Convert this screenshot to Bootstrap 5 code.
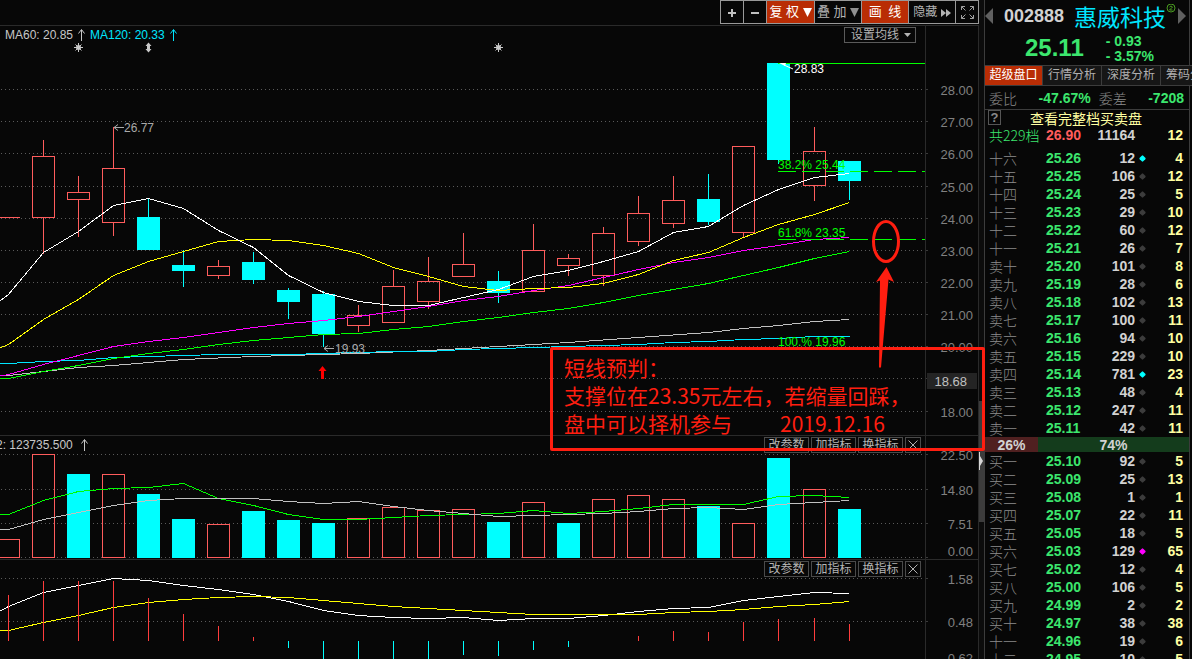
<!DOCTYPE html>
<html lang="zh-CN">
<head>
<meta charset="utf-8">
<meta name="viewport" content="width=device-width, initial-scale=1">
<title>惠威科技 002888</title>
<link rel="stylesheet" href="https://cdn.jsdelivr.net/npm/bootstrap@5.3.0/dist/css/bootstrap.min.css">
<style>
:root{--ink:#070707;--edge:#2a2a2a;--grey:#8c8c8c;--pale:#c8c8c8;--up:#ff5c5c;--down:#00ffff;--gain:#3ce66e;--hot:#b92d05;--note:#ff1e10;--cream:#ffffa0}
body{background:var(--ink);color:var(--pale);font:12px/16px "Liberation Sans","Noto Sans CJK SC",sans-serif;height:100vh;overflow:hidden}
button,select{font:inherit;color:inherit;background:none;border:0;padding:0;border-radius:0}
.toolbar{height:25px}
.tool{height:24px;border:1px solid #999;border-left-width:0;font-size:13px;line-height:20px;color:#b4b4b4;white-space:nowrap}
.tool:first-child{border-left-width:1px}
.tool.on{background:var(--hot);color:#fff}
.tool.tight{font-size:12px}
.w-s{width:24px}.w-m{width:47px}.w-l{width:48px}.w-f{width:23px}
.pane{border-top:1px solid var(--edge);border-right:1px solid var(--edge)}
.pane svg.plot{display:block;width:100%;height:auto}
.pane-tools{top:1px;right:57px;gap:2px}
.pane-tools button,.avg{border:1px solid #4a4a4a;height:16px;line-height:14px;color:#b4b4b4}
.pane-tools button{width:45px}
.pane-tools .shut{width:16px}
.avg{top:1px;right:62px;width:72px;border-color:#5a5a5a}
.avg select{appearance:none;width:70px;height:14px;padding-left:6px;line-height:14px;display:block}
.avg svg{right:4px;top:5px;pointer-events:none}
.strip{width:5px;background:#0c0c0c;padding-top:401px}
.thumb{height:121px;background:#3c3c3c;padding-top:50px}
.callout{top:347px;right:-1px;width:435px;height:104px;border:3px solid var(--note);border-radius:2px;padding:3px 11px;color:var(--note);font:21px/28px "Noto Sans CJK SC",sans-serif;z-index:3;pointer-events:none;white-space:nowrap}
.callout p{margin:0}
.callout .day{margin-left:48px}
.quote{width:208px;border-left:1px solid #3c3c3c;padding-right:2px}
.quote-in{border-right:1px solid #3c3c3c}
.name-row{height:31px;padding:0 3px 0 0}
.code{font:bold 18px/24px "Liberation Sans",sans-serif;color:#d2d2d2;margin-left:11px}
.title{font:23px/30px "Noto Sans CJK SC",sans-serif;color:#00e6ff;margin-left:10px}
.last{font:bold 24px/30px "Liberation Sans",sans-serif;color:var(--gain)}
.num{font:bold 14px/18px "Liberation Sans",sans-serif}
.num.delta{line-height:15px;padding-top:2px;color:var(--gain)}
.price-row{height:34px;padding-left:40px;gap:22px}
.tabs{height:21px;border-top:1px solid #3c3c3c;border-bottom:1px solid #3c3c3c;overflow:hidden;width:207px}
.tabs button{flex:none;width:59px;height:19px;line-height:19px;background:#161616;color:#b0b0b0;border-right:1px solid #3c3c3c}
.tabs button.on{width:58px;background:var(--hot);color:#fff}
.balance{height:24px;padding:0 5px 0 4px;border-bottom:1px solid #3c3c3c}
.cjk{font:14px/18px "Noto Sans CJK SC",sans-serif;font-weight:300;color:var(--grey)}
.gain{color:var(--gain)}
.full{height:16px;padding-left:3px}
.full a{font:14px/16px "Noto Sans CJK SC",sans-serif;color:var(--cream);text-decoration:none;margin-left:29px}
.help{width:13px;height:15px;border:1px solid #555;color:#888;font-size:13px;line-height:13px;font-weight:bold}
table.book{width:100%;table-layout:fixed;border-collapse:collapse}
#asks{margin-top:5px}
.book td,.book th{padding:0;height:18px;line-height:18px;white-space:nowrap}
.book th{padding-left:4px;text-align:left}
.c1{width:61px}.c2{width:36px}.c3{width:53px}.c4{width:14px}
.book .cnt{color:var(--cream);padding-right:6px;text-align:right}
.book .vol{color:#d2d2d2;text-align:right}
.book .px{color:var(--gain)}
.book .px.red{color:var(--up)}
.dot{display:block;width:5px;height:5px;margin:auto;background:#3c3c3c;border-radius:1px;transform:rotate(45deg)}
.dot.cy{background:#00ffff}.dot.mg{background:#ff00ff}
.power{height:15px;color:#d2d2d2}
.power .num{line-height:16px}
.buy{background:#502020}.sell{background:#143c1c}
.plot text{font:12px "Liberation Sans",sans-serif}
.plot .ax{font-size:13px;fill:#808080;text-anchor:end}
.plot g.px1{shape-rendering:crispEdges;fill:none}
</style>
<script src="https://cdn.jsdelivr.net/npm/bootstrap@5.3.0/dist/js/bootstrap.bundle.min.js"></script>
</head>
<body>
<div class="d-flex align-items-stretch">
<main class="flex-grow-1 d-flex position-relative">
 <div class="flex-grow-1">
  <div class="toolbar d-flex justify-content-end">
   <button class="tool w-s" aria-label="放大"><svg width="10" height="10"><path d="M5 1v8M1 5h8" stroke="#c0c0c0" stroke-width="2"/></svg></button>
   <button class="tool w-f" aria-label="缩小"><svg width="10" height="10"><path d="M1 5h8" stroke="#c0c0c0" stroke-width="2"/></svg></button>
   <button class="tool w-l on">复 权 <svg width="9" height="9"><path d="M0 0h9L4.500 9z" fill="#fff"/></svg></button>
   <button class="tool w-m">叠 加 <svg width="9" height="9"><path d="M0 0h9L4.500 9z" fill="#909090"/></svg></button>
   <button class="tool w-m on">画&ensp;线</button>
   <button class="tool w-m tight">隐藏 <svg width="10" height="8"><path d="M0 0l5 4-5 4zM5 0l5 4-5 4z" fill="#b4b4b4"/></svg></button>
   <button class="tool w-f" aria-label="全屏"><svg width="13" height="13" fill="none" stroke="#a0a0a0"><path d="M.5 4V.5H4M.5.5l4 4M9 .5h3.500V4M12.500.5l-4 4M.5 9v3.500H4M.5 12.500l4-4M9 12.500h3.500V9M12.500 12.500l-4-4"/></svg></button>
  </div>
  <section class="pane position-relative">
   <svg class="plot" viewBox="0 26 978 409" id="price"></svg>
   <div class="avg position-absolute"><select aria-label="设置均线"><option>设置均线</option></select><svg class="position-absolute" width="7" height="4"><path d="M0 0h7L3.500 4z" fill="#b4b4b4"/></svg></div>
  </section>
  <section class="pane position-relative">
   <svg class="plot" viewBox="0 436 978 123" id="volume"></svg>
   <div class="pane-tools position-absolute d-flex"><button>改参数</button><button>加指标</button><button>换指标</button><button class="shut d-flex align-items-center justify-content-center" aria-label="关闭"><svg width="10" height="10"><path d="M.5.5l9 9M9.500.5l-9 9" stroke="#b0b0b0"/></svg></button></div>
  </section>
  <section class="pane position-relative">
   <svg class="plot" viewBox="0 560 978 105" id="macd"></svg>
   <div class="pane-tools position-absolute d-flex"><button>改参数</button><button>加指标</button><button>换指标</button><button class="shut d-flex align-items-center justify-content-center" aria-label="关闭"><svg width="10" height="10"><path d="M.5.5l9 9M9.500.5l-9 9" stroke="#b0b0b0"/></svg></button></div>
  </section>
 </div>
 <div class="strip"><div class="thumb"><svg class="d-block" width="4" height="20"><path d="M0 1l1 0v4l3 5-3 5v4h-1z" fill="#d8d8d8"/></svg></div></div>
 <div class="callout position-absolute"><p>短线预判：</p><p>支撑位在23.35元左右，若缩量回踩，</p><p>盘中可以择机参与<span class="day">2019.12.16</span></p></div>
</main>
<aside class="quote flex-shrink-0"><div class="quote-in">
 <div class="name-row d-flex align-items-center">
  <svg width="8" height="16"><path d="M8 0v16L0 8z" fill="#606060"/></svg>
  <span class="code">002888</span><span class="title">惠威科技</span>
  <svg class="align-self-start mt-1" width="10" height="12" fill="none" stroke="#4a9a20"><circle cx="5" cy="4" r="4"/><path d="M3.500 3q1.500-2 3 0L3.500 6h3"/></svg>
  <svg class="ms-auto" width="8" height="16"><path d="M0 0l8 8-8 8z" fill="#606060"/></svg>
 </div>
 <div class="price-row d-flex align-items-center"><span class="last">25.11</span><div class="num delta"><div>- 0.93</div><div>- 3.57%</div></div></div>
 <div class="tabs d-flex"><button class="on">超级盘口</button><button>行情分析</button><button>深度分析</button><button>筹码分析</button></div>
 <div class="balance d-flex align-items-center"><span class="cjk">委比</span><span class="num gain ms-auto">-47.67%</span><span class="cjk ms-2">委差</span><span class="num gain ms-auto">-7208</span></div>
 <div class="full d-flex"><button class="help">?</button><a href="#">查看完整档买卖盘</a></div>
 <table class="book" id="top"></table>
 <table class="book" id="asks"></table>
 <div class="power d-flex text-center"><div class="buy num" id="buy">26%</div><div class="sell num flex-grow-1">74%</div></div>
 <table class="book" id="bids"></table>
</div></aside>
</div>
<script>
const RED='#ff5c5c',CY='#00ffff',GR='#00ff00',GY='#c0c0c0';
const cx=i=>8+35*i+(i>22?1:0);
const grid=ys=>ys.map(y=>`<path d="M1 ${y}.5H926" stroke="#5a5a5a" stroke-dasharray="1 3"/><path d="M926 ${y}.5h2" stroke="#3a3a3a"/>`).join('');
const axis=l=>l.map(([t,y])=>`<text class="ax" x="973" y="${y}">${t}</text>`).join('');
// one value per bar; "start" is the value at the left edge of the plot
const line=(start,v,c)=>`<polyline stroke="${c}" points="0,${start} ${v.map((y,i)=>(cx(i)+.5)+','+(y+.5)).join(' ')}"/>`;
const rail='<path d="M925.5 0V700" stroke="#2a2a2a"/>';
// [colour, high, top, bottom, low]
const K=[['r',140,156,218,254],['r',176,192,200,237],['r',127,168,223,236],['c',199,217,250,250],['c',250,265,271,287],['r',260,266,276,279],['c',252,262,280,284],['c',288,290,302,319],['c',291,294,334,347],['r',305,315,326,332],['r',270,286,323,323],['r',257,281,302,309],['r',233,264,277,277],['c',271,281,293,303],['r',224,250,292,292],['r',254,258,266,276],['r',227,233,276,286],['r',196,213,242,246],['r',176,200,224,228],['c',174,199,222,225],['r',146,146,233,237],['c',63,63,160,164],['r',127,151,186,201],['c',161,161,181,200]];
const candles=K.map(([k,h,t,b,l],n)=>{const x=cx(n+1);return k==='r'
 ?`<path stroke="${RED}" d="M${x+.5} ${h}V${t}M${x+.5} ${b}V${l}M${x-10.5} ${t+.5}h22V${b-.5}h-22z"/>`
 :`<path stroke="${CY}" d="M${x+.5} ${h}V${l}"/><rect x="${x-11}" y="${t}" width="23" height="${b-t}" fill="${CY}"/>`}).join('');
const star=x=>`<circle cx="${x}" cy="47.5" r="2.500" fill="#c8c8c8"/><path stroke="#c8c8c8" d="M${x-4.5} 47.5h9M${x} 43v9M${x-3} 44.500l6 6M${x+3} 44.500l-6 6"/>`;
const fib=y=>`<path stroke="${GR}" stroke-dasharray="18 6" d="M778 ${y}.5H925"/>`;
price.innerHTML='<g class="px1">'+grid([89,121,153,186,218,250,282,314,346,378,411])+rail
+`<path stroke="${RED}" d="M0 217.5H20"/>`+candles
+line(376,[375,371,367,365,362,359,357.5,356,355,354,353,351.5,350,348,346,344,342,339.5,337,334.5,332,328,325,321,319],GY)
+line(363,[363,361,360,357,356,355,354,354,354,353,352,351,351,349,348,347,346,345,344,342,341,339,338,336,336],'#00e6ff')
+line(379,[378,371,365,358,353,349,344,340,337,334,333,329,326,321,317,312,308,302,295,289,283,275,267,258,251],GR)
+line(376,[374,364,355,346,341,337,332,327,323,320,316,311,306,300,296,290,285,277,269,262,257,250,245,239,237],'#ff00ff')
+line(348,[344,319,299,275,261,251,241,239,240,245,253,267,276,286,290,288,287,283,274,260,252,237,224,214,202],'#ffff00')
+line(301,[294,252,231,205,198,208,230,247,275,292,301,305,305,297,289,276,270,261,251,232,226,205,189,177,173],'#fff')
+fib(171)+fib(239)+`<path stroke="${GR}" d="M778 63.5H925"/></g>`
+`<g fill="${GR}"><text x="778" y="169">38.2% 25.44</text><text x="778" y="237">61.8% 23.35</text><text x="778" y="346">100.% 19.96</text></g>`
+'<path d="M779 63l7 0-1 3z" fill="#fff"/><path d="M784 65l9 4" stroke="#fff"/><text x="794" y="73" fill="#fff">28.83</text>'
+'<g fill="#aaa"><text x="124" y="132">26.77</text><text x="335" y="353">19.93</text></g>'
+'<path d="M114 127.500h10M118 124.500l-4 3 4 3M324 348.500h10M328 345.500l-4 3 4 3" stroke="#aaa" fill="none"/>'
+'<path d="M322.500 366l4 5h-2.500v8h-3v-8h-2.500z" fill="red"/>'
+star(78.5)+star(498.5)+'<path d="M148.500 42.500l3 3.500h-1.500v3h1.500l-3 3.500-3-3.500h1.500v-3h-1.500z" fill="#c8c8c8"/>'
+'<text x="5" y="39" fill="#c8c8c8">MA60: 20.85</text><text x="90" y="39" fill="#00e6ff">MA120: 20.33</text>'
+'<path d="M81.500 41V30M78.500 33.500l3-4 3 4" stroke="#c8c8c8" fill="none"/><path d="M173.500 41V30M170.500 33.500l3-4 3 4" stroke="#00e6ff" fill="none"/>'
+axis([['28.00',95],['27.00',127],['26.00',159],['25.00',192],['24.00',224],['23.00',256],['22.00',288],['21.00',320],['20.00',352],['18.00',417]])
+'<rect x="927" y="373" width="50" height="16" fill="#242424"/><text x="967" y="386" class="ax" style="fill:#c0c0c0">18.68</text>'
+'<g fill="#ff1e10"><ellipse cx="886" cy="241.500" rx="12.500" ry="20" fill="none" stroke="#ff1e10" stroke-width="3"/><path d="M886.500 267l7.500 15-5.500-2.500-7.500 88h-2l1-87-4 1.500z"/></g>';
const V=['r539','r454','c474','r474','c494','c519','r524','c511','c520','c523','r518','r507','r510','r509','c522','r502','c523','r499','r495','r499','c506','r523','c458','r489','c509'];
volume.innerHTML='<g class="px1">'+grid([454,489,523,557])+rail
+V.map((s,i)=>{const t=+s.slice(1),x=cx(i);return s[0]==='r'?`<rect x="${x-10.5}" y="${t+.5}" width="22" height="${557-t}" stroke="${RED}"/>`:`<rect x="${x-11}" y="${t}" width="23" height="${558-t}" fill="${CY}"/>`}).join('')
+line(514,[514,500,491,488,487,483,498,505,514,519,519,517,515,514,513,510,513,511,508,504,504,504,496,495,497],GR)
+line(529,[529,519,512,505,500,498,498,498,501,503,501,506,510,513,516,515,514,513,511,508,507,509,504,502,500],GY)+'</g>'
+'<text x="-4" y="449" fill="#c8c8c8">2: 123735.500</text><path d="M84.500 451V440M81.500 443.500l3-4 3 4" stroke="#c8c8c8" fill="none"/>'
+axis([['22.50',460],['14.80',495],['7.51',529],['0.00',556]]);
const M=[595,581,581,581,598,614,626,637,648,664,664,664,664,655,656,650,647,641,636,631,632,622,619,618,624];
macd.innerHTML='<g class="px1">'+grid([578,621])+rail
+line(611,[606,592,585,578,580,585,589,594,601,610,615,617,618,617,620,618,618,615,611,608,607,600,596,592,593],'#fff')
+line(631,[630,622,615,607,602,599,597,596,597,600,603,606,608,610,612,614,614,614,614,612,611,609,606,604,601],'#ffff00')
+M.map((y,i)=>`<path stroke="${y<640?'#ff3c3c':CY}" d="M${cx(i)+.5} 640.5V${y}"/>`).join('')+'</g>'
+axis([['1.58',584],['0.48',627],['0.62',663]]);
const cols='<colgroup><col class="c1"><col class="c2"><col class="c3"><col class="c4"><col></colgroup>';
const rows=s=>cols+'<tbody>'+s.split('|').map(r=>{const [n,p,v,c,d]=r.split(',');return `<tr><th scope="row" class="cjk${n[0]==='共'?' gain':''}">${n}</th><td class="num px${n[0]==='共'?' red':''}">${p}</td><td class="num vol">${v}</td><td>${n[0]==='共'?'':`<span class="dot ${d||''}"></span>`}</td><td class="num cnt">${c}</td></tr>`}).join('')+'</tbody>';
document.getElementById('top').innerHTML=rows('共229档,26.90,11164,12');
asks.innerHTML=rows('十六,25.26,12,4,cy|十五,25.25,106,12|十四,25.24,25,5|十三,25.23,29,10|十二,25.22,60,12|十一,25.21,26,7|卖十,25.20,101,8|卖九,25.19,28,6|卖八,25.18,102,13|卖七,25.17,100,11|卖六,25.16,94,10|卖五,25.15,229,10|卖四,25.14,781,23,cy|卖三,25.13,48,4|卖二,25.12,247,11|卖一,25.11,42,11');
bids.innerHTML=rows('买一,25.10,92,5|买二,25.09,25,13|买三,25.08,1,1|买四,25.07,22,11|买五,25.05,18,5|买六,25.03,129,65,mg|买七,25.02,12,4|买八,25.00,106,5|买九,24.99,2,2|买十,24.97,38,38|十一,24.96,19,6|十二,24.95,10,5');
buy.style.width='26%';
</script>
</body>
</html>
